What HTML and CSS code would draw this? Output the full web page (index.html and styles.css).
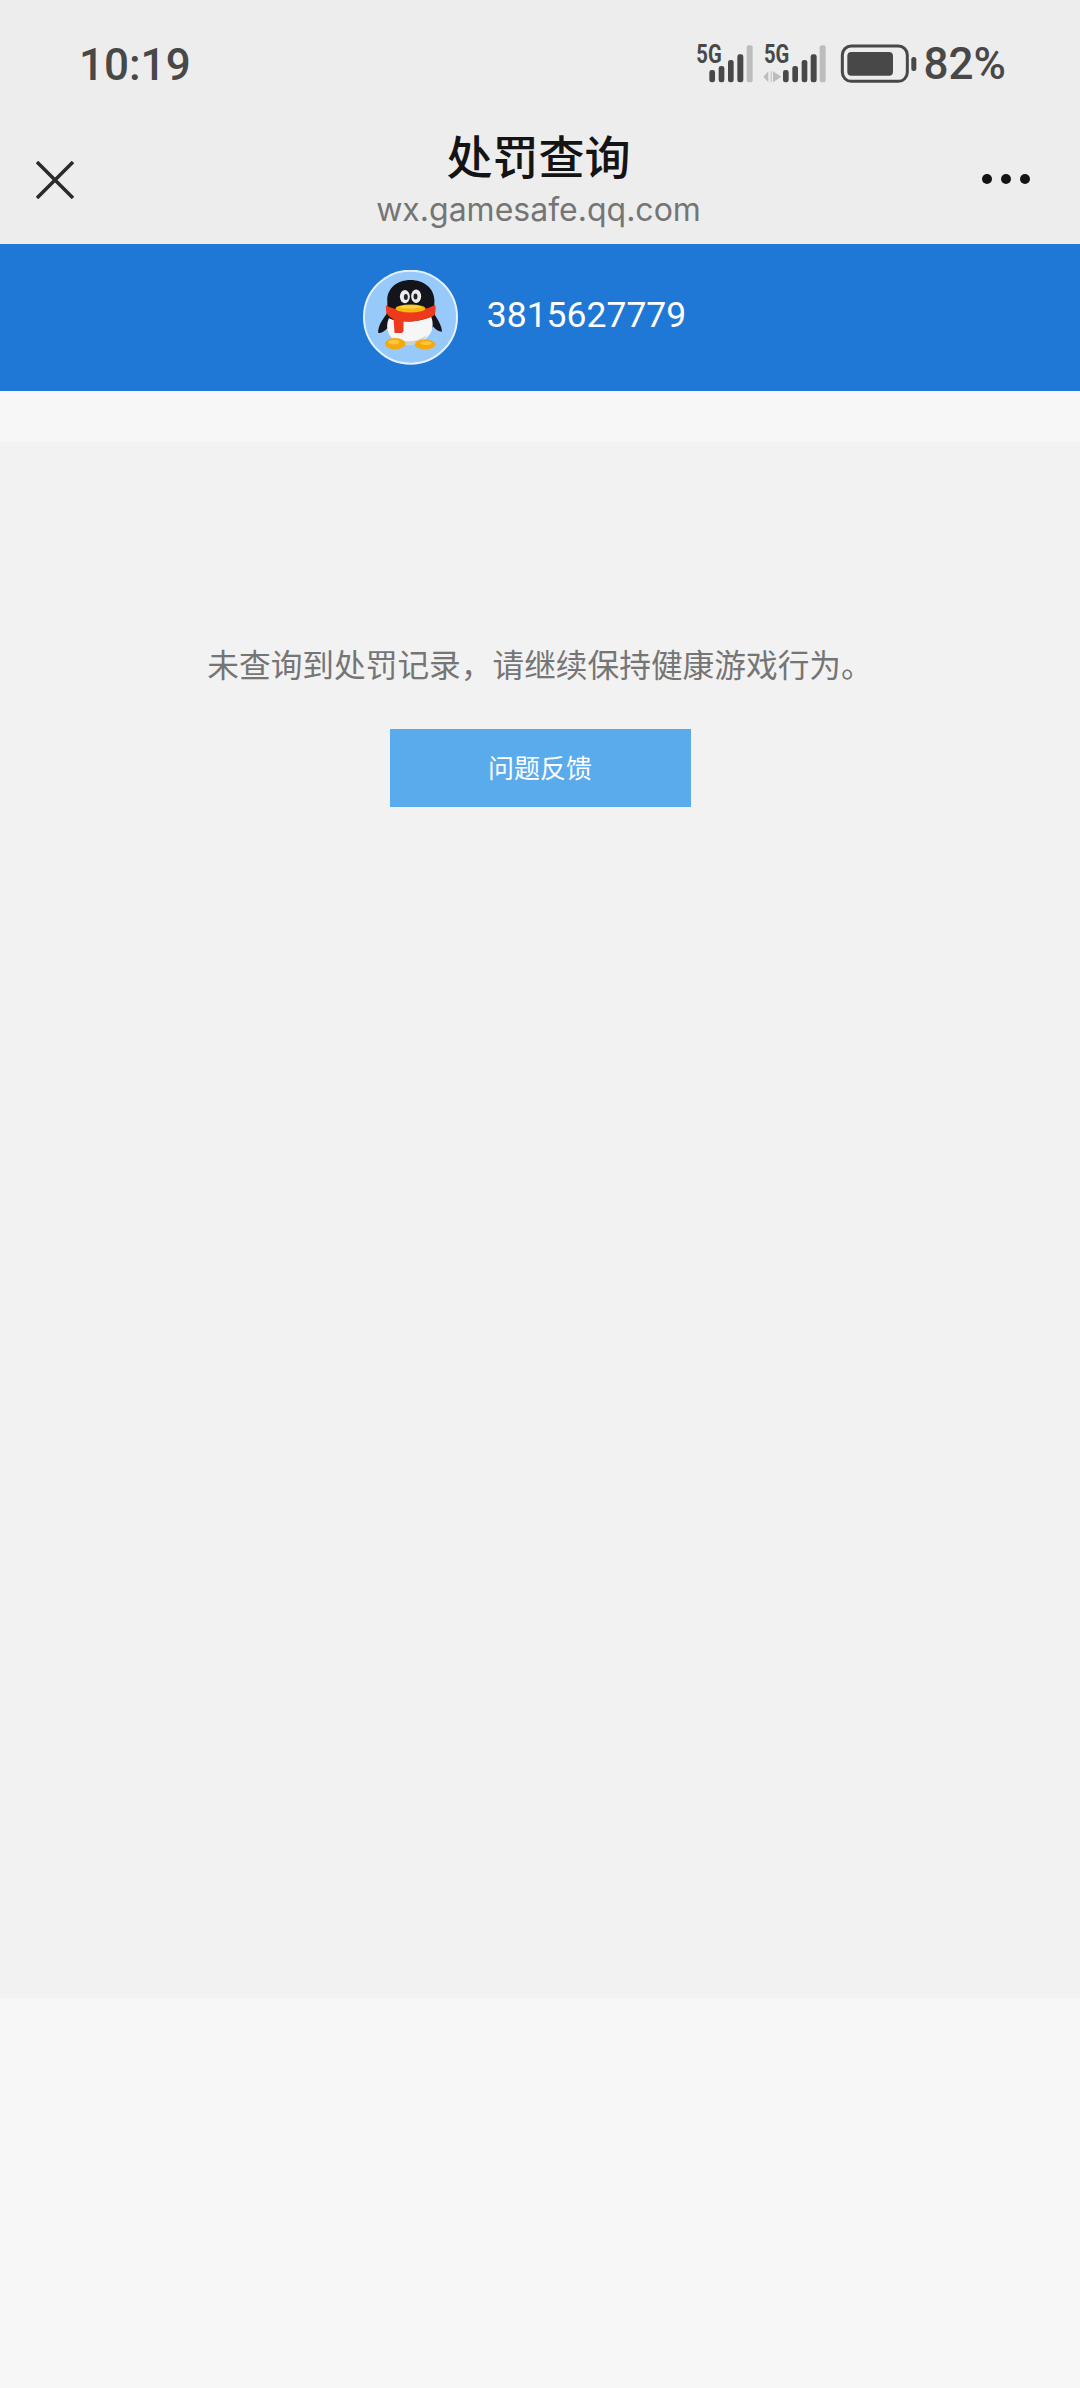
FILE: index.html
```html
<!DOCTYPE html>
<html lang="zh-CN">
<head>
<meta charset="utf-8">
<title>处罚查询</title>
<link rel="stylesheet" href="styles.css">
</head>
<body>
<div class="page">
  <header class="top">
    <div class="statusbar">
      <span class="time">10:19</span>
      <div class="status-right">
        <svg class="signals" viewBox="110 50 675 166" aria-hidden="true">
          <g class="dark">
            <text class="five-g" x="117" y="132" textLength="76" lengthAdjust="spacingAndGlyphs">5G</text>
            <rect x="156" y="152" width="17" height="37" rx="7"/>
            <rect x="184" y="140" width="17" height="49" rx="7"/>
            <rect x="212" y="122" width="17" height="67" rx="7"/>
            <rect x="240" y="105" width="18" height="84" rx="7"/>
            <rect class="light" x="268" y="78" width="18" height="111" rx="6"/>
            <text class="five-g" x="320" y="132" textLength="76" lengthAdjust="spacingAndGlyphs">5G</text>
            <path class="light" d="M318 172l15-16v33zM340 156h3v33h-3zM347 156l0 33 25-17z"/>
            <rect x="377" y="152" width="17" height="37" rx="7"/>
            <rect x="405" y="140" width="17" height="49" rx="7"/>
            <rect x="433" y="122" width="17" height="67" rx="7"/>
            <rect x="460" y="105" width="18" height="84" rx="7"/>
            <rect class="light" x="487" y="78" width="18" height="111" rx="6"/>
            <rect class="outline" x="555" y="80" width="195" height="106" rx="27"/>
            <rect x="570" y="98" width="137" height="71" rx="12"/>
            <rect x="762" y="113" width="15" height="42" rx="7"/>
          </g>
        </svg>
        <span class="percent">82%</span>
      </div>
    </div>
    <nav class="nav">
      <svg class="close" viewBox="0 0 38 38" aria-hidden="true"><path d="M1 1l36 36M37 1L1 37"/></svg>
      <div class="heading">
        <div class="title">处罚查询</div>
        <div class="domain">wx.gamesafe.qq.com</div>
      </div>
      <div class="more"><i></i><i></i><i></i></div>
    </nav>
  </header>

  <section class="account">
    <svg class="avatar" viewBox="72 60 286 286" aria-hidden="true">
      <circle cx="215" cy="202" r="140" fill="#98c9fb" stroke="#e4f1fe" stroke-width="6"/>
      <path fill="#14141c" d="M145 150c0-35 30-60 70-60s72 25 72 62c0 20-3 30 2 44 8 14 20 30 21 50-10 0-20-8-27-16-20 38-110 42-135 2-8 10-20 18-30 18-2-20 12-40 24-56 5-12 3-27 3-44z"/>
      <path fill="#f6f6f6" d="M150 205c30 14 90 14 127-5 8 20 6 42-6 56-14 20-40 30-60 30-30 0-54-16-62-36-6-14-6-30 1-45z"/>
      <path fill="#9aa0a8" opacity=".45" d="M160 262c25 18 75 18 105-6-10 20-35 30-55 30-22 0-40-10-50-24z"/>
      <ellipse cx="198" cy="140" rx="15" ry="20" fill="#ececec"/>
      <ellipse cx="232" cy="139" rx="15" ry="20" fill="#ececec"/>
      <ellipse cx="201" cy="141" rx="6" ry="9" fill="#23232a"/>
      <ellipse cx="230" cy="140" rx="6" ry="9" fill="#23232a"/>
      <path fill="#ee3a1c" d="M141 166c35 22 115 22 148-2 3 10 2 22-2 32-10 8-45 16-65 18l-28 0v30l-5 6h-22l-3-42c-10-5-20-12-22-22-1-8-1-12-1-20z"/>
      <ellipse cx="215" cy="176" rx="45" ry="12" fill="#f5b90e"/>
      <ellipse cx="215" cy="171" rx="32" ry="5" fill="#fbd24a"/>
      <ellipse cx="169" cy="282" rx="31" ry="17" fill="#f4a90c"/>
      <ellipse cx="259" cy="284" rx="31" ry="15" fill="#f4a90c"/>
      <ellipse cx="165" cy="277" rx="17" ry="7" fill="#fbc63c"/>
      <ellipse cx="262" cy="280" rx="17" ry="6" fill="#fbc63c"/>
    </svg>
    <span class="qq">3815627779</span>
  </section>

  <div class="band"></div>

  <main class="main">
    <p class="message">未查询到处罚记录，请继续保持健康游戏行为。</p>
    <a class="feedback">问题反馈</a>
  </main>
</div>
</body>
</html>
```

FILE: styles.css
```css
* { box-sizing: border-box; }
html, body { margin: 0; padding: 0; }
body {
  font-family: "Roboto", "Noto Sans CJK SC", sans-serif;
  background: #f7f7f7;
}
.page {
  width: 1080px;
  height: 2388px;
  display: flex;
  flex-direction: column;
  background: #f7f7f7;
}
.top {
  height: 244px;
  background: #ededed;
  display: flex;
  flex-direction: column;
}
.statusbar {
  height: 128px;
  flex: none;
  display: flex;
  justify-content: space-between;
  align-items: center;
  padding: 0 74px 0 79px;
  color: #484848;
}
.time {
  font-size: 44px;
  font-weight: 500;
  margin-top: 2px;
}
.status-right {
  display: flex;
  align-items: center;
  gap: 5px;
}
.signals { width: 225px; height: 55.33px; display: block; }
.dark { fill: #484848; }
.light { fill: #bdbdbd; }
.five-g { font-family: "Roboto", sans-serif; font-size: 76px; font-weight: 700; }
.outline { fill: none; stroke: #484848; stroke-width: 9px; }
.percent { font-size: 44px; font-weight: 500; margin-top: 1px; }
.nav {
  flex: 1;
  display: grid;
  grid-template-columns: 1fr auto 1fr;
  align-items: start;
}
.close { width: 38px; height: 38px; display: block; margin: 33px 0 0 36px; }
.close path { fill: none; stroke: #2b2b2b; stroke-width: 3.5px; }
.heading { text-align: center; margin: -1px 3px 0 0; }
.title {
  font-family: "Noto Sans CJK SC", sans-serif;
  font-size: 46px;
  font-weight: 500;
  line-height: 54px;
  color: #141414;
}
.domain {
  font-family: "Inter", sans-serif;
  font-size: 32px;
  line-height: 58px;
  color: #757575;
}
.more { justify-self: end; display: flex; gap: 9px; margin: 46px 50px 0 0; }
.more i { width: 10px; height: 10px; border-radius: 50%; background: #141414; }
.account {
  height: 147px;
  flex: none;
  background: #1f78d6;
  display: flex;
  align-items: center;
  justify-content: center;
  gap: 29px;
  padding-right: 31px;
  color: #fff;
}
.avatar { width: 95px; height: 95px; display: block; }
.qq { font-size: 35.5px; margin-bottom: 6px; }
.band { height: 51px; flex: none; background: #f7f7f7; }
.main {
  height: 1556px;
  flex: none;
  background: #f2f2f2;
  display: flex;
  flex-direction: column;
  align-items: center;
  padding-top: 183px;
}
.message {
  margin: 0;
  font-family: "Noto Sans CJK SC", sans-serif;
  font-size: 31.7px;
  line-height: 76px;
  color: #757575;
}
.feedback {
  margin-top: 28px;
  width: 301px;
  height: 78px;
  display: flex;
  align-items: center;
  justify-content: center;
  padding-bottom: 3px;
  background: #5aabec;
  color: #fff;
  font-family: "Noto Sans CJK SC", sans-serif;
  font-size: 26px;
}
```
